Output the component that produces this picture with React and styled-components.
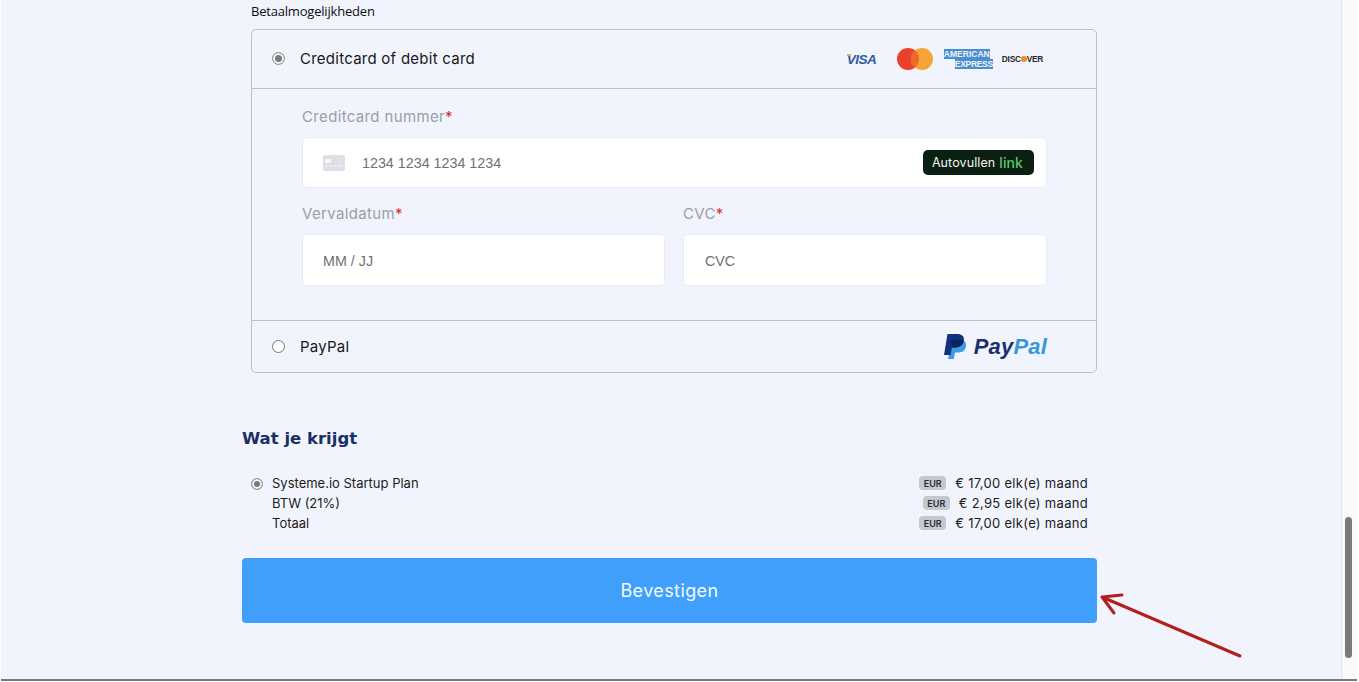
import styled, { createGlobalStyle } from "styled-components";

const GlobalStyle = createGlobalStyle`
  * { box-sizing: border-box; }
  html, body { margin: 0; padding: 0; height: 100%; overflow: hidden; background: #fff; }
  body { font-family: Inter, "Liberation Sans", sans-serif; color: #1b1b1f; }
`;

const RadioDot = ({ checked }) => <Radio $checked={checked} />;

const CreditCardIcon = () => (
  <svg width="22" height="16" viewBox="0 0 22 16">
    <rect width="22" height="16" rx="1.5" fill="#dddfe7" />
    <rect x="2" y="4" width="6" height="4" fill="#f7f7fa" />
    <path d="M2 11h18" stroke="#f3f3f7" strokeWidth="1.4" strokeDasharray="3 1.6" />
  </svg>
);

const MastercardIcon = () => (
  <svg width="36" height="22" viewBox="0 0 36 22">
    <circle cx="11" cy="11" r="11" fill="#e9412b" />
    <circle cx="25" cy="11" r="11" fill="#f6a435" />
    <path d="M18 2.5a11 11 0 0 1 0 17a11 11 0 0 1 0-17z" fill="#f0692c" />
  </svg>
);

const PaypalIcon = () => (
  <svg width="23" height="26" viewBox="0 0 23 26">
    <path d="M7 6h9c4 0 6.500 2 6 6-.6 4.500-3.500 6.500-8 6.500h-3L9.800 25H4.200z" fill="#3d9be0" />
    <path d="M3.500 0h9.500c5 0 7.500 2.300 6.800 6.500-.8 4.800-4 7-8.800 7H8L6.500 21H0z" fill="#11317f" />
    <path d="M7 6h9.500c1.500 0 2.600.2 3.300.6-.9 4.700-4 6.900-8.800 6.900H8z" fill="#0c2160" />
  </svg>
);

const ArrowIcon = () => (
  <svg width="150" height="76" viewBox="0 0 150 76">
    <path
      d="M141 64L3 5M3 5L23 3M3 5L15 21"
      fill="none"
      stroke="#b0201f"
      strokeWidth="3"
      strokeLinecap="round"
      strokeLinejoin="round"
    />
  </svg>
);

const summary = [
  { name: "Systeme.io Startup Plan", price: "€ 17,00 elk(e) maand", checked: true },
  { name: "BTW (21%)", price: "€ 2,95 elk(e) maand" },
  { name: "Totaal", price: "€ 17,00 elk(e) maand" },
];

const App = () => {
  return (
    <Page>
      <GlobalStyle />
      <Window>
        <Main>
          <Column>
            <SectionLabel>Betaalmogelijkheden</SectionLabel>
            <PaymentCard>
              <MethodHeader>
                <MethodName>
                  <RadioDot checked />
                  Creditcard of debit card
                </MethodName>
                <CardLogos>
                  <VisaLogo>VISA</VisaLogo>
                  <MastercardIcon />
                  <AmexLogo>
                    <span>AMERICAN</span>
                    <span>EXPRESS</span>
                  </AmexLogo>
                  <DiscoverLogo>
                    DISC<i />VER
                  </DiscoverLogo>
                </CardLogos>
              </MethodHeader>
              <CardForm>
                <Field>
                  <FieldLabel>
                    Creditcard nummer<em>*</em>
                  </FieldLabel>
                  <NumberInput>
                    <CreditCardIcon />
                    <Placeholder>1234 1234 1234 1234</Placeholder>
                    <AutofillButton>
                      Autovullen <b>link</b>
                    </AutofillButton>
                  </NumberInput>
                </Field>
                <TwoFields>
                  <Field>
                    <FieldLabel>
                      Vervaldatum<em>*</em>
                    </FieldLabel>
                    <TextInput>
                      <Placeholder>MM / JJ</Placeholder>
                    </TextInput>
                  </Field>
                  <Field>
                    <FieldLabel>
                      CVC<em>*</em>
                    </FieldLabel>
                    <CvcInput>
                      <Placeholder>CVC</Placeholder>
                    </CvcInput>
                  </Field>
                </TwoFields>
              </CardForm>
              <MethodFooter>
                <MethodName>
                  <RadioDot />
                  PayPal
                </MethodName>
                <PaypalLogo>
                  <PaypalIcon />
                  <PaypalText>
                    Pay<span>Pal</span>
                  </PaypalText>
                </PaypalLogo>
              </MethodFooter>
            </PaymentCard>

            <Heading>Wat je krijgt</Heading>
            <SummaryList>
              {summary.map((row) => (
                <SummaryRow key={row.name}>
                  <SummaryName>
                    {row.checked && <SmallRadio />}
                    {row.name}
                  </SummaryName>
                  <SummaryPrice>
                    <Currency>EUR</Currency>
                    {row.price}
                  </SummaryPrice>
                </SummaryRow>
              ))}
            </SummaryList>
            <ConfirmWrap>
              <ConfirmButton>Bevestigen</ConfirmButton>
              <ArrowMark>
                <ArrowIcon />
              </ArrowMark>
            </ConfirmWrap>
          </Column>
        </Main>
        <ScrollTrack>
          <ScrollThumb />
        </ScrollTrack>
      </Window>
    </Page>
  );
};

export default App;

const Page = styled.div`
  width: 1359px;
  height: 682px;
  padding: 0 2px 1px 1px;
  overflow: hidden;
  background: #fff;
`;

const Window = styled.div`
  display: flex;
  height: 681px;
  border-bottom: 2px solid #77797d;
`;

const Main = styled.main`
  flex: 1;
  padding-left: 241px;
  background: #f1f4fc;
`;

const Column = styled.div`
  width: 855px;
`;

const SectionLabel = styled.div`
  height: 29px;
  margin-left: 9px;
  padding-top: 3px;
  font-family: "Open Sans", sans-serif;
  font-size: 13px;
  line-height: 16px;
  letter-spacing: -0.2px;
  color: #0d0d12;
`;

const PaymentCard = styled.section`
  margin-left: 9px;
  width: 846px;
  height: 344px;
  border: 1px solid #b9bfcc;
  border-radius: 5px;
`;

const MethodHeader = styled.div`
  display: flex;
  align-items: center;
  justify-content: space-between;
  height: 59px;
  padding: 0 53px 1px 20px;
  border-bottom: 1px solid #b9bfcc;
`;

const MethodFooter = styled(MethodHeader)`
  height: 52px;
  padding: 0 49px 1px 20px;
  border-bottom: none;
  border-top: 1px solid #b9bfcc;
`;

const MethodName = styled.div`
  display: flex;
  align-items: center;
  gap: 15px;
  font-size: 15px;
  letter-spacing: 0.25px;
  color: #17171c;
`;

const Radio = styled.span`
  width: 13px;
  height: 13px;
  border-radius: 50%;
  border: 1px solid ${(p) => (p.$checked ? "#9b9b96" : "#767676")};
  background: ${(p) => (p.$checked ? "#7b7b76" : "#fff")};
  box-shadow: ${(p) => (p.$checked ? "inset 0 0 0 2px #f1f4fc" : "none")};
`;

const SmallRadio = styled(Radio).attrs({ $checked: true })`
  position: absolute;
  left: -21px;
  top: 3px;
  width: 12px;
  height: 12px;
`;

const CardLogos = styled.div`
  display: flex;
  align-items: center;
`;

const VisaLogo = styled.span`
  position: relative;
  width: 50px;
  padding-top: 1px;
  font-family: "Liberation Sans", sans-serif;
  font-size: 13.500px;
  font-weight: 700;
  font-style: italic;
  letter-spacing: -0.5px;
  color: #2f5c9e;

  &::before {
    content: "";
    position: absolute;
    left: 0;
    top: 3px;
    width: 4px;
    height: 2px;
    background: #e8b04a;
  }
`;

const AmexLogo = styled.span`
  display: flex;
  flex-direction: column;
  width: 49px;
  margin-left: 11px;
  font-family: "Liberation Sans", sans-serif;
  font-size: 8.500px;
  font-weight: 700;
  line-height: 10px;
  color: #f1f4fc;

  span {
    width: fit-content;
    background: #4a8fce;
    white-space: nowrap;
  }

  span:last-child {
    align-self: flex-end;
    letter-spacing: -0.3px;
  }
`;

const DiscoverLogo = styled.span`
  display: inline-flex;
  align-items: center;
  margin-left: 9px;
  font-family: "Liberation Sans", sans-serif;
  font-size: 8.300px;
  font-weight: 700;
  letter-spacing: -0.25px;
  color: #26262a;

  i {
    width: 6px;
    height: 6px;
    border-radius: 50%;
    background: #ee8a2b;
  }
`;

const CardForm = styled.div`
  height: 231px;
  padding: 18px 49px 0 50px;
`;

const Field = styled.div`
  min-width: 0;
`;

const FieldLabel = styled.div`
  height: 30px;
  font-size: 15px;
  line-height: 20px;
  letter-spacing: 0.35px;
  color: #9a9ea9;

  em {
    font-style: normal;
    color: #d22f2f;
  }
`;

const NumberInput = styled.div`
  display: flex;
  align-items: center;
  gap: 17px;
  height: 51px;
  margin-bottom: 16px;
  padding: 0 12px 0 20px;
  background: #fff;
  border: 1px solid #e8ebf3;
  border-radius: 4px;
`;

const TextInput = styled(NumberInput)`
  height: 52px;
  margin-bottom: 0;
  padding-top: 2px;
`;

const CvcInput = styled(TextInput)`
  padding-left: 21px;
`;

const Placeholder = styled.span`
  flex: 1;
  font-family: "Liberation Sans", sans-serif;
  font-size: 14.300px;
  color: #6f7176;
`;

const AutofillButton = styled.span`
  display: flex;
  align-items: center;
  gap: 4px;
  height: 25px;
  margin-bottom: 1px;
  padding: 0 11px 0 9px;
  background: #0b2012;
  border-radius: 5px;
  font-size: 12.500px;
  letter-spacing: 0.1px;
  color: #f1f4f1;

  b {
    font-size: 14px;
    font-weight: 500;
    color: #55c86a;
  }
`;

const TwoFields = styled.div`
  display: grid;
  grid-template-columns: 363px 364px;
  gap: 18px;
`;

const PaypalLogo = styled.div`
  display: flex;
  align-items: center;
  gap: 7px;
  margin-bottom: -1px;
`;

const PaypalText = styled.span`
  font-family: "Liberation Sans", sans-serif;
  font-size: 22px;
  font-weight: 700;
  font-style: italic;
  letter-spacing: 0.2px;
  color: #1a2f6e;

  span {
    color: #3a96d8;
  }
`;

const Heading = styled.h2`
  margin: 54px 0 0;
  height: 46px;
  font-family: "DejaVu Sans", sans-serif;
  font-size: 16.500px;
  font-weight: 700;
  line-height: 24px;
  color: #1a2f66;
`;

const SummaryList = styled.div`
  padding: 0 9px 0 30px;
`;

const SummaryRow = styled.div`
  display: flex;
  align-items: center;
  justify-content: space-between;
  height: 20px;
  font-size: 13px;
  color: #1c1c20;
`;

const SummaryName = styled.div`
  position: relative;
`;

const SummaryPrice = styled.div`
  display: flex;
  align-items: center;
  gap: 9px;
  letter-spacing: 0.3px;
`;

const Currency = styled.span`
  display: flex;
  align-items: center;
  justify-content: center;
  width: 27px;
  height: 14px;
  border-radius: 4px;
  background: #c5c8cf;
  font-size: 9px;
  font-weight: 600;
  letter-spacing: 0;
  color: #2c2c30;
`;

const ConfirmWrap = styled.div`
  position: relative;
  margin-top: 25px;
`;

const ConfirmButton = styled.button`
  display: block;
  width: 100%;
  height: 65px;
  border: none;
  border-radius: 4px;
  background: #3f9ffa;
  font-family: Inter, sans-serif;
  font-size: 18px;
  letter-spacing: 0.4px;
  color: #f3f8ff;
`;

const ArrowMark = styled.div`
  position: absolute;
  left: 857px;
  top: 34px;
  line-height: 0;
`;

const ScrollTrack = styled.div`
  width: 16px;
  padding: 517px 0 0 3px;
  background: #f9f9fa;
  border-left: 1px solid #e4e6ec;
`;

const ScrollThumb = styled.div`
  width: 7px;
  height: 141px;
  border-radius: 4px;
  background: #7a7a7a;
`;
